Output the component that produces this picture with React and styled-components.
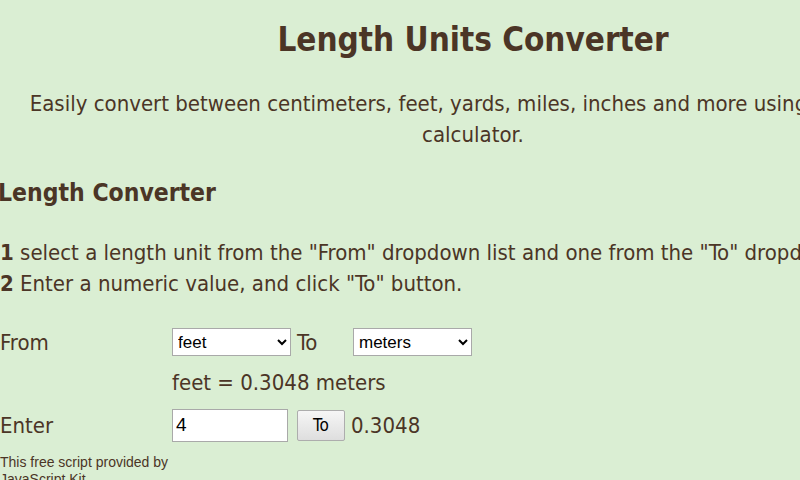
import React, { useState } from 'react'
import styled, { createGlobalStyle } from 'styled-components'

const GlobalStyle = createGlobalStyle`
html, body {
    margin: 0;
    padding: 0;
    background-color: #daeed3;
    overflow: hidden;
}
body {
    width: 800px;
    height: 480px;
}
`

const Page = styled.div`
    width: 946px;
    color: #4b3526;
    font-family: "DejaVu Sans Condensed", "DejaVu Sans", sans-serif;
    * {
        box-sizing: border-box;
    }
`

const Title = styled.h1`
    margin: 0;
    padding-top: 18px;
    text-align: center;
    font-size: 33px;
    line-height: 44px;
    font-weight: bold;
`

const Intro = styled.p`
    margin: 26px 0 0;
    padding: 0 20px;
    text-align: center;
    font-size: 22px;
    line-height: 31px;
`

const SubTitle = styled.h2`
    margin: 26px 0 0 -2px;
    font-size: 24.5px;
    line-height: 34px;
    font-weight: bold;
`

const Steps = styled.div`
    margin-top: 27px;
    font-size: 22px;
    line-height: 31px;
    white-space: nowrap;
    b {
        font-weight: bold;
    }
`

const Form = styled.div`
    margin-top: 29px;
    display: grid;
    grid-template-columns: 172px auto;
    row-gap: 6px;
    font-size: 22px;
`

const Label = styled.div`
    display: flex;
    align-items: center;
    height: ${p => p.h || 28}px;
`

const Row = styled.div`
    display: flex;
    align-items: center;
    gap: ${p => p.gap || 6}px;
    height: ${p => p.h || 28}px;
`

const Select = styled.select`
    width: ${p => p.w}px;
    height: 28px;
    font-family: "Liberation Sans", Arial, sans-serif;
    font-size: 17px;
    color: #000;
    background: #fff;
    border: 1px solid #a9a9a9;
    padding: 0 1px;
`

const ToText = styled.span`
    width: 50px;
`

const Input = styled.input`
    width: 116px;
    height: 33px;
    font-family: "Liberation Sans", Arial, sans-serif;
    font-size: 19px;
    color: #000;
    background: #fff;
    border: 1px solid #a9a9a9;
    padding: 0 3px;
    outline: none;
`

const Button = styled.button`
    width: 48px;
    height: 31px;
    margin-left: 3px;
    font-family: "DejaVu Sans Condensed", "DejaVu Sans", sans-serif;
    font-size: 17px;
    color: #000;
    background: linear-gradient(#f6f6f6, #dedede);
    border: 1px solid #adadad;
    border-radius: 2px;
`

const Credit = styled.div`
    margin-top: 12px;
    font-family: "Liberation Sans", Arial, sans-serif;
    font-size: 14px;
    line-height: 17px;
`

const App = () => {
    const [value, setValue] = useState('4')
    return (
        <>
            <GlobalStyle />
            <Page>
                <Title>Length Units Converter</Title>
                <Intro>
                    Easily convert between centimeters, feet, yards, miles, inches and more using this online calculator.
                </Intro>
                <SubTitle>Length Converter</SubTitle>
                <Steps>
                    <div><b>1</b> select a length unit from the "From" dropdown list and one from the "To" dropdown list.</div>
                    <div><b>2</b> Enter a numeric value, and click "To" button.</div>
                </Steps>
                <Form>
                    <Label>From</Label>
                    <Row>
                        <Select w={119} defaultValue="feet">
                            <option value="feet">feet</option>
                            <option value="meters">meters</option>
                        </Select>
                        <ToText>To</ToText>
                        <Select w={119} defaultValue="meters">
                            <option value="feet">feet</option>
                            <option value="meters">meters</option>
                        </Select>
                    </Row>
                    <Label />
                    <Row h={40}>feet = 0.3048 meters</Row>
                    <Label h={34}>Enter</Label>
                    <Row h={34} gap={6}>
                        <Input value={value} onChange={e => setValue(e.target.value)} />
                        <Button>To</Button>
                        <span>0.3048</span>
                    </Row>
                </Form>
                <Credit>
                    This free script provided by<br />
                    JavaScript Kit
                </Credit>
            </Page>
        </>
    )
}

export default App
